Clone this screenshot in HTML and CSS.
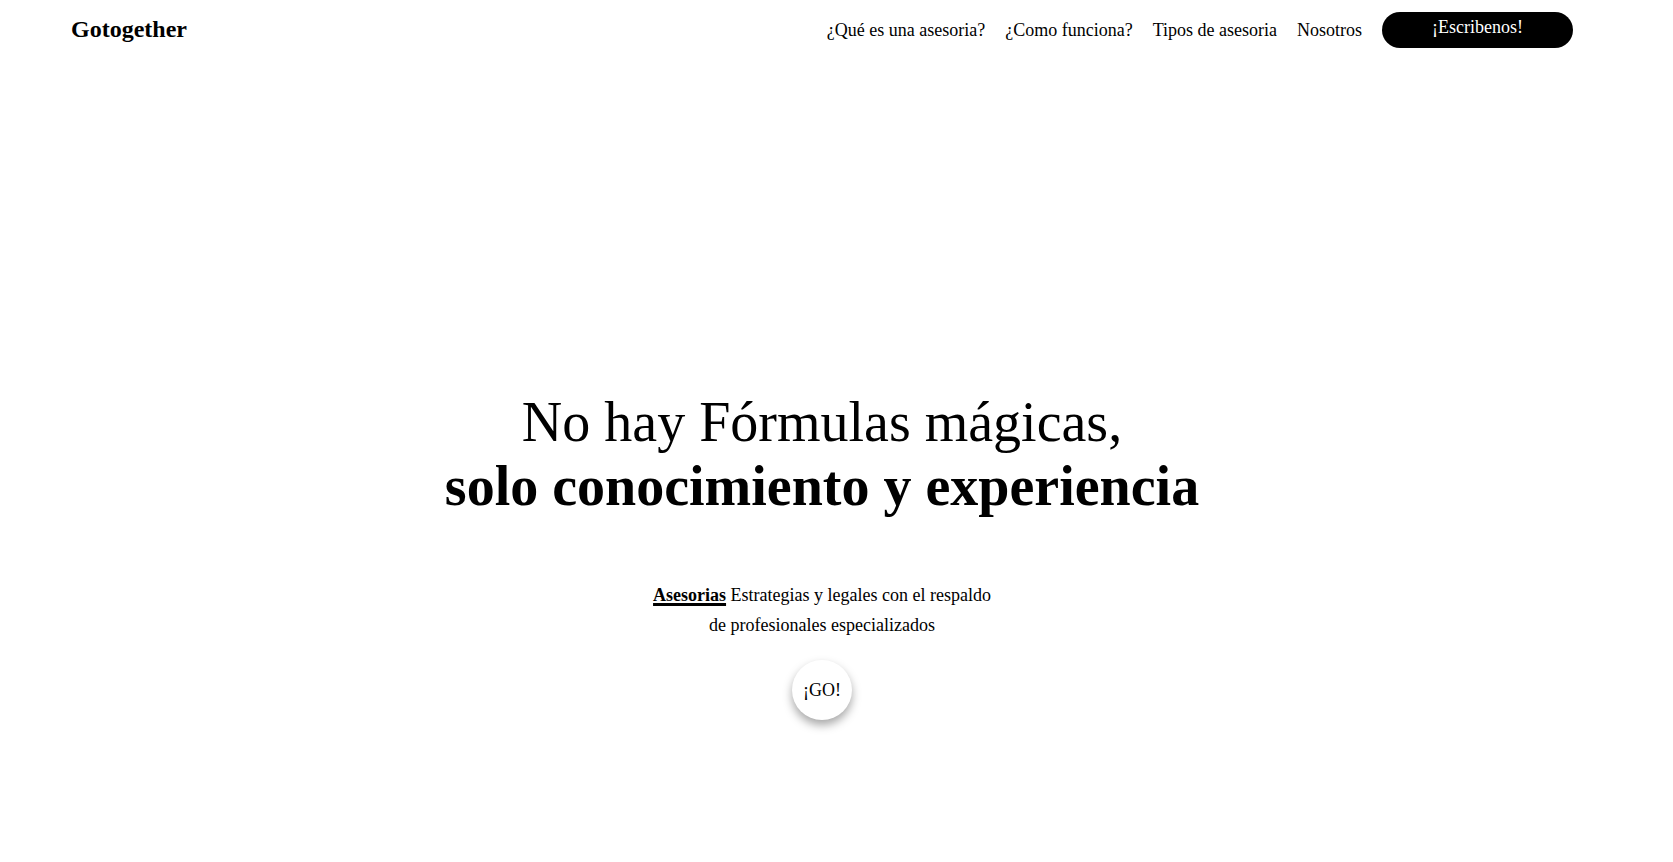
FILE: index.html
```html
<!DOCTYPE html>
<html lang="es">
<head>
<meta charset="utf-8">
<title>Gotogether</title>
<link rel="stylesheet" href="styles.css">
</head>
<body>
<div class="page">
  <header class="header">
    <div class="logo">Gotogether</div>
    <nav class="nav">
      <a class="nav-link" href="#">¿Qué es una asesoria?</a>
      <a class="nav-link" href="#">¿Como funciona?</a>
      <a class="nav-link" href="#">Tipos de asesoria</a>
      <a class="nav-link" href="#">Nosotros</a>
      <a class="nav-cta" href="#">¡Escribenos!</a>
    </nav>
  </header>
  <main class="hero">
    <h1 class="hero-title">No hay Fórmulas mágicas,<br><strong>solo conocimiento y experiencia</strong></h1>
    <p class="hero-text"><span class="hero-key">Asesorias</span> Estrategias y legales con el respaldo<br>de profesionales especializados</p>
    <a class="go" href="#">¡GO!</a>
  </main>
</div>
</body>
</html>
```

FILE: styles.css
```css
html, body {
  margin: 0;
  padding: 0;
  background: #fff;
}

body {
  font-family: "Liberation Serif", "Times New Roman", serif;
  color: #000;
}

.page {
  width: 1644px;
}

.header {
  display: flex;
  align-items: center;
  justify-content: space-between;
  padding: 12px 71px 12px 71px;
}

.logo {
  font-size: 24px;
  font-weight: bold;
  line-height: normal;
  margin-top: -1px;
}

.nav {
  display: flex;
  align-items: center;
  gap: 20px;
}

.nav-link {
  font-size: 18px;
  color: #000;
  text-decoration: none;
  line-height: normal;
}

.nav-cta {
  box-sizing: border-box;
  width: 191px;
  height: 36px;
  padding-top: 5px;
  border-radius: 18px;
  background: #000;
  color: #fff;
  font-size: 18px;
  line-height: normal;
  text-align: center;
  text-decoration: none;
}

.hero {
  display: flex;
  flex-direction: column;
  align-items: center;
  padding: 330px 0 100px;
  text-align: center;
}

.hero-title {
  margin: 0;
  font-size: 56px;
  font-weight: normal;
  line-height: normal;
}

.hero-title strong {
  font-weight: bold;
}

.hero-text {
  margin: 62px 0 0;
  font-size: 18px;
  line-height: 30px;
}

.hero-key {
  font-weight: bold;
  text-decoration: underline;
  text-decoration-thickness: 3px;
  text-underline-offset: 2px;
}

.go {
  display: flex;
  align-items: center;
  justify-content: center;
  margin-top: 20px;
  width: 60px;
  height: 60px;
  border-radius: 50%;
  background: #fff;
  color: #000;
  font-size: 18px;
  text-decoration: none;
  box-shadow: 0 5px 10px rgba(0, 0, 0, 0.35);
}
```
